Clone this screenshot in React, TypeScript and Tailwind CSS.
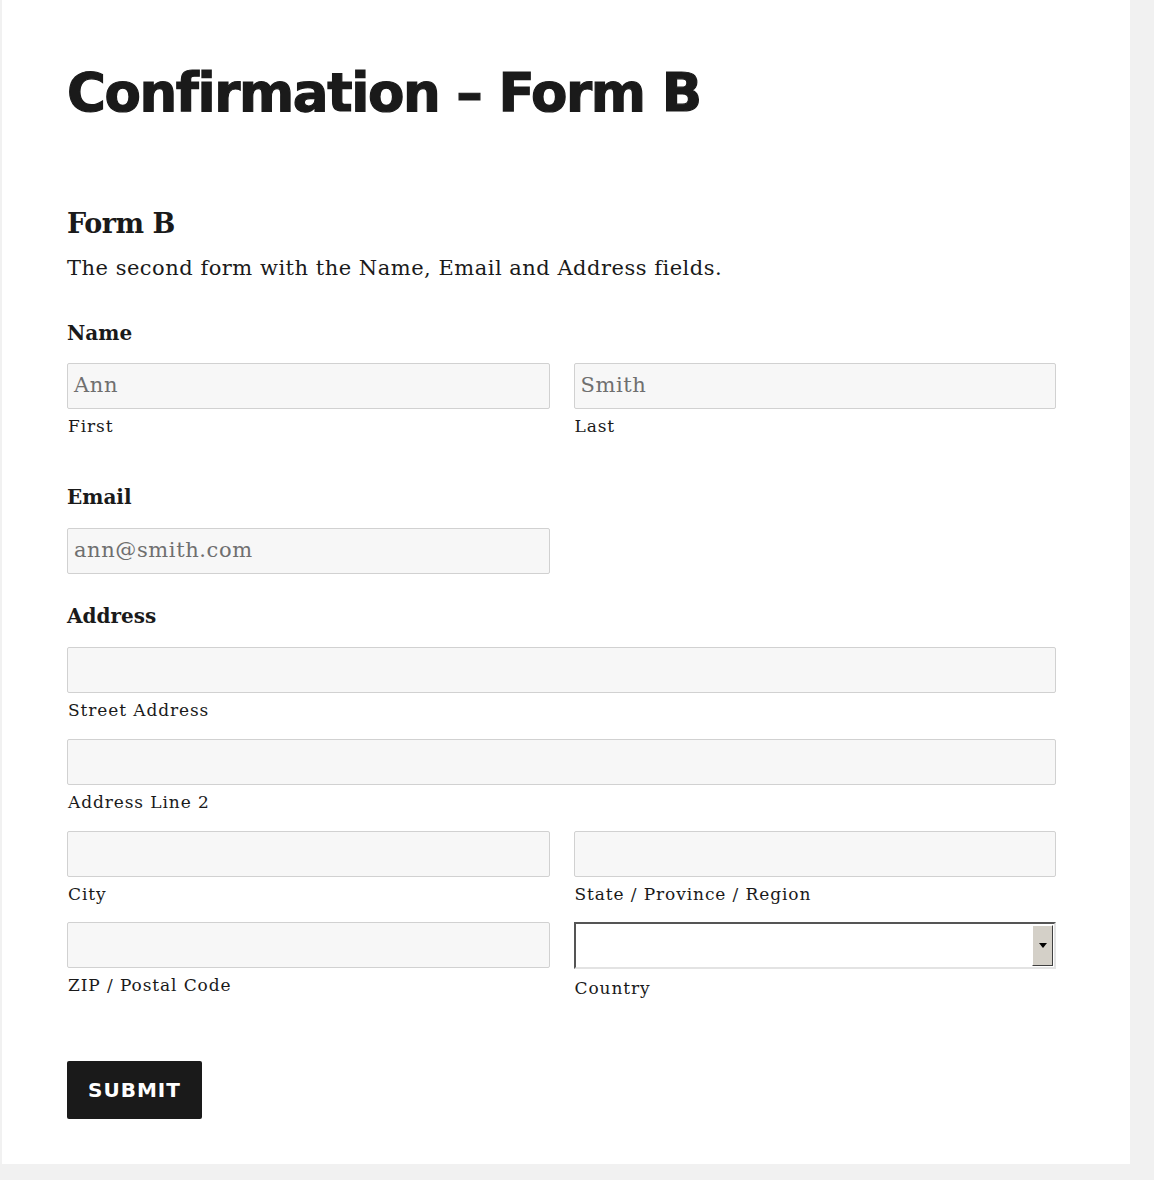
import { ReactNode } from 'react';

const serif = { fontFamily: '"DejaVu Serif", "Liberation Serif", serif' };
const heading = { fontFamily: '"DejaVu Sans", "Liberation Sans", sans-serif' };

function TextInput({ value, className = '' }: { value?: string; className?: string }) {
  return (
    <div
      className={`h-[46px] bg-[#f7f7f7] border border-[#d1d1d1] rounded-[2px] px-[6px] flex items-center text-[21px] tracking-[0.6px] text-[#6f6f6f] ${className}`}
    >
      {value}
    </div>
  );
}

function SubLabel({ children }: { children: ReactNode }) {
  return <div className="text-[17px] text-[#1a1a1a] tracking-[0.9px] leading-[34px] pl-[1px]">{children}</div>;
}

function Field({ value, label }: { value?: string; label: string }) {
  return (
    <div className="flex flex-col">
      <TextInput value={value} />
      <SubLabel>{label}</SubLabel>
    </div>
  );
}

function CountrySelect() {
  return (
    <div className="flex flex-col">
      <div className="h-[47px] bg-white border-2 border-t-[#555] border-l-[#555] border-b-[#e3e3e3] border-r-[#e3e3e3] flex justify-end items-stretch p-[1px]">
        <div className="w-[21px] bg-[#d4d0c8] border border-t-white border-l-white border-b-[#404040] border-r-[#404040] flex items-center justify-center">
          <svg width="8" height="5" viewBox="0 0 8 5">
            <path d="M0 0 L8 0 L4 5 Z" fill="#000" />
          </svg>
        </div>
      </div>
      <div className="text-[17px] text-[#1a1a1a] tracking-[0.9px] leading-[38px] pl-[1px]">Country</div>
    </div>
  );
}

export default function App() {
  return (
    <div className="min-h-[1180px] bg-[#f1f1f1] pl-[2px] pr-[24px] pb-[16px]">
      <div className="bg-white pl-[65px] pr-[74px] pt-[62px] pb-[45px] text-[#1a1a1a]" style={serif}>
        <h1
          className="text-[53px] font-bold leading-[62px] tracking-[-1.4px] [-webkit-text-stroke:1.2px_#1a1a1a]"
          style={heading}
        >
          Confirmation – Form B
        </h1>

        {/* Form header */}
        <h3 className="mt-[82px] text-[27px] font-bold leading-[36px] tracking-[-0.5px]">Form B</h3>
        <p className="mt-[12px] text-[21px] leading-[28px] tracking-[0.5px]">
          The second form with the Name, Email and Address fields.
        </p>

        {/* Name */}
        <div className="mt-[37px] text-[20px] font-bold leading-[28px]">Name</div>
        <div className="mt-[16px] grid grid-cols-2 gap-x-[24px]">
          <Field value="Ann" label="First" />
          <Field value="Smith" label="Last" />
        </div>

        {/* Email */}
        <div className="mt-[40px] text-[20px] font-bold leading-[28px]">Email</div>
        <div className="mt-[17px] w-[483px]">
          <TextInput value="ann@smith.com" />
        </div>

        {/* Address */}
        <div className="mt-[28px] text-[20px] font-bold leading-[28px]">Address</div>
        <div className="mt-[17px] flex flex-col gap-y-[12px]">
          <Field label="Street Address" />
          <Field label="Address Line 2" />
          <div className="grid grid-cols-2 gap-x-[24px] gap-y-[11px]">
            <Field label="City" />
            <Field label="State / Province / Region" />
            <Field label="ZIP / Postal Code" />
            <CountrySelect />
          </div>
        </div>

        <button
          className="mt-[54px] h-[58px] px-[21px] bg-[#1a1a1a] text-white rounded-[2px] text-[20px] font-bold tracking-[1px]"
          style={heading}
        >
          SUBMIT
        </button>
      </div>
    </div>
  );
}
